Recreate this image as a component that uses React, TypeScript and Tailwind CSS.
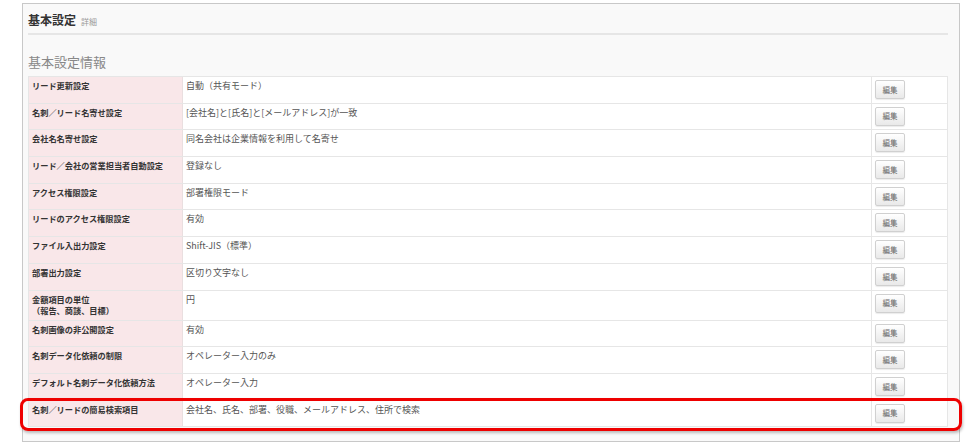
import React from 'react';

type Row = { label: string[]; value: string; tall?: boolean };

const rows: Row[] = [
  { label: ['リード更新設定'], value: '自動（共有モード）' },
  { label: ['名刺／リード名寄せ設定'], value: '[会社名]と[氏名]と[メールアドレス]が一致' },
  { label: ['会社名名寄せ設定'], value: '同名会社は企業情報を利用して名寄せ' },
  { label: ['リード／会社の営業担当者自動設定'], value: '登録なし' },
  { label: ['アクセス権限設定'], value: '部署権限モード' },
  { label: ['リードのアクセス権限設定'], value: '有効' },
  { label: ['ファイル入出力設定'], value: 'Shift-JIS（標準）' },
  { label: ['部署出力設定'], value: '区切り文字なし' },
  { label: ['金額項目の単位', '（報告、商談、目標）'], value: '円', tall: true },
  { label: ['名刺画像の非公開設定'], value: '有効' },
  { label: ['名刺データ化依頼の制限'], value: 'オペレーター入力のみ' },
  { label: ['デフォルト名刺データ化依頼方法'], value: 'オペレーター入力' },
  { label: ['名刺／リードの簡易検索項目'], value: '会社名、氏名、部署、役職、メールアドレス、住所で検索' },
];

const font = { fontFamily: '"Noto Sans CJK JP", "Noto Sans", sans-serif' };

function EditButton() {
  return (
    <button className="block w-[30px] h-[19px] rounded-[2px] border border-[#d0d0d0] bg-gradient-to-b from-white to-[#e9e9e9] text-[7.5px] leading-none text-[#666] shadow-[0_1px_1px_rgba(0,0,0,0.08)]">
      編集
    </button>
  );
}

export default function App() {
  return (
    <div className="w-[970px] h-[444px] bg-white overflow-hidden" style={font}>
      <div className="ml-[22px] mt-[3px] w-[938px] h-[439px] border border-[#c8c8c8] bg-[#f9f9f9] pl-[5px] pr-[11px]">
        {/* header */}
        <div className="h-[31px] flex items-end pb-[7px] border-b-2 border-[#e6e6e6]">
          <span className="text-[12px] font-bold text-[#333] leading-none">基本設定</span>
          <span className="ml-[5px] text-[8px] text-[#999] leading-none">詳細</span>
        </div>
        <div className="h-[41px] flex items-end pb-[8px] text-[13px] text-[#888] leading-none">基本設定情報</div>

        {/* table */}
        <div className="border-t border-l border-[#e6e6e6]">
          {rows.map((r, i) => (
            <div
              key={i}
              className={`relative flex border-b border-[#e6e6e6] ${r.tall ? 'h-[30px]' : 'h-[26.7px]'}`}
            >
              <div className="w-[154px] shrink-0 bg-[#f9e7e9] border-r border-[#eadfe0] pl-[3px] pt-[3px] text-[8.2px] font-bold text-[#333] leading-[11px]">
                {r.label.map((l, j) => (
                  <div key={j}>{l}</div>
                ))}
              </div>
              <div className="flex-1 bg-white border-r border-[#e6e6e6] pl-[3px] pt-[3px] text-[9px] text-[#555] leading-[12px]">
                {r.value}
              </div>
              <div className="w-[76px] shrink-0 bg-white border-r border-[#e6e6e6] pl-[3px] pt-[3px]">
                <EditButton />
              </div>
              {i === rows.length - 1 && (
                <div className="absolute -top-[3px] -bottom-[5px] -left-[9px] -right-[14px] rounded-[8px] border-[3px] border-[#ee0000] pointer-events-none shadow-[1px_2px_3px_rgba(0,0,0,0.25)]" />
              )}
            </div>
          ))}
        </div>
      </div>
    </div>
  );
}
